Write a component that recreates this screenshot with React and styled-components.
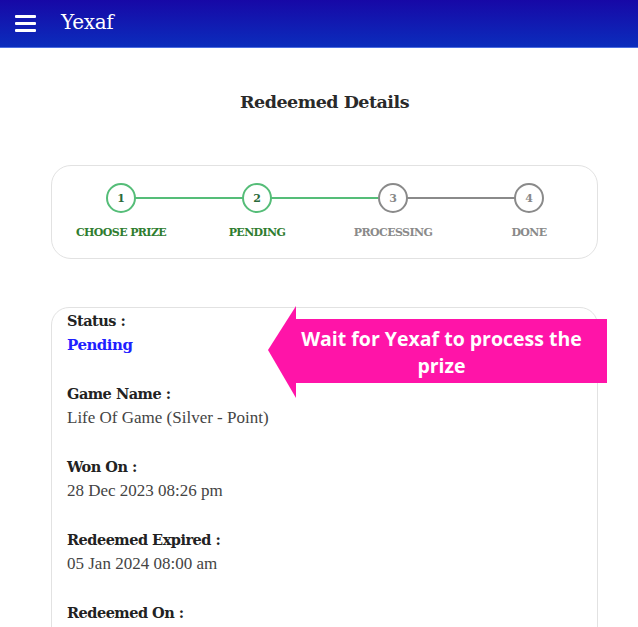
import React from "react";
import styled, { createGlobalStyle } from "styled-components";

const Global = createGlobalStyle`
  html, body { margin: 0; padding: 0; background: #fff; }
  body { font-family: "DejaVu Serif", "Liberation Serif", serif; }
`;

const Page = styled.div`
  width: 638px;
  height: 627px;
  overflow: hidden;
  position: relative;
  background: #fff;
`;

const Header = styled.header`
  height: 47px;
  display: flex;
  align-items: center;
  gap: 25px;
  padding: 0 15px;
  background: linear-gradient(180deg, #1708a6 0%, #0b2dbd 100%);
  border-bottom: 1px solid #4a6de0;
`;

const Burger = styled.div`
  width: 21px;
  display: flex;
  flex-direction: column;
  gap: 4px;
  span { display: block; height: 3px; background: #fff; border-radius: 1px; }
`;

const Brand = styled.div`
  color: #fff;
  font-family: "DejaVu Serif", serif;
  font-size: 20px;
  letter-spacing: -0.3px;
  margin-top: -4px;
`;

const Title = styled.h1`
  margin: 42px 0 0;
  padding-left: 11px;
  text-align: center;
  font-size: 17.5px;
  font-weight: bold;
  color: #2a2a2a;
  line-height: 24px;
  letter-spacing: -0.5px;
`;

const StepCard = styled.div`
  margin: 51px 40px 0 51px;
  height: 94px;
  border: 1px solid #e2e2e2;
  border-radius: 20px;
  display: grid;
  grid-template-columns: repeat(4, 136px);
  padding-left: 1px;
  box-sizing: border-box;
`;

const Step = styled.div`
  position: relative;
  display: flex;
  flex-direction: column;
  align-items: center;
  padding-top: 17px;
`;

const Line = styled.div`
  position: absolute;
  top: 31px;
  left: 50%;
  width: 136px;
  height: 2px;
  background: ${p => (p.$done ? "#55bd78" : "#8a8a8a")};
`;

const Circle = styled.div`
  position: relative;
  z-index: 1;
  width: 26px;
  height: 26px;
  border-radius: 50%;
  border: 2px solid ${p => (p.$done ? "#55bd78" : "#8a8a8a")};
  background: #fff;
  display: flex;
  align-items: center;
  justify-content: center;
  font-size: 11px;
  font-weight: bold;
  color: ${p => (p.$done ? "#2a6b3a" : "#888")};
`;

const StepLabel = styled.div`
  margin-top: 13px;
  font-size: 11px;
  line-height: 14px;
  font-weight: bold;
  letter-spacing: -0.6px;
  color: ${p => (p.$done ? "#2f7d2f" : "#8a8a8a")};
  white-space: nowrap;
`;

const DetailCard = styled.div`
  margin: 48px 40px 0 51px;
  border: 1px solid #e2e2e2;
  border-radius: 18px;
  padding: 1px 15px 40px;
  height: 400px;
`;

const Field = styled.div`
  margin-bottom: 25px;
`;

const Label = styled.div`
  font-size: 14.5px;
  font-weight: bold;
  color: #222;
  line-height: 24px;
  letter-spacing: -0.5px;
`;

const Value = styled.div`
  line-height: 24px;
  color: ${p => (p.$accent ? "#1f1fff" : "#444")};
  font-weight: ${p => (p.$accent ? "bold" : "normal")};
  font-family: ${p => (p.$accent ? '"DejaVu Serif", serif' : '"Liberation Serif", serif')};
  font-size: ${p => (p.$accent ? "15px" : "17px")};
  letter-spacing: ${p => (p.$accent ? "-0.5px" : "0")};
`;

const Callout = styled.div`
  position: absolute;
  left: 268px;
  top: 306px;
  width: 339px;
  height: 92px;
  display: flex;
`;

const Head = styled.svg`
  flex: none;
  width: 28px;
  height: 92px;
`;

const Body = styled.div`
  margin-top: 13px;
  width: 311px;
  height: 64px;
  background: #ff14a8;
  color: #fff;
  font-family: "Open Sans", sans-serif;
  font-weight: bold;
  font-size: 19.5px;
  line-height: 27px;
  text-align: center;
  padding: 6px 20px 0 0;
  box-sizing: border-box;
  white-space: nowrap;
`;

const steps = [
  { n: 1, label: "CHOOSE PRIZE", done: true, lineDone: true },
  { n: 2, label: "PENDING", done: true, lineDone: true },
  { n: 3, label: "PROCESSING", done: false, lineDone: false },
  { n: 4, label: "DONE", done: false },
];

const fields = [
  { label: "Status :", value: "Pending", accent: true },
  { label: "Game Name :", value: "Life Of Game (Silver - Point)" },
  { label: "Won On :", value: "28 Dec 2023 08:26 pm" },
  { label: "Redeemed Expired :", value: "05 Jan 2024 08:00 am" },
  { label: "Redeemed On :", value: "" },
];

export default function App() {
  return (
    <Page>
      <Global />
      <Header>
        <Burger><span /><span /><span /></Burger>
        <Brand>Yexaf</Brand>
      </Header>
      <Title>Redeemed Details</Title>
      <StepCard>
        {steps.map((s, i) => (
          <Step key={s.n}>
            {i < 3 && <Line $done={s.lineDone} />}
            <Circle $done={s.done}>{s.n}</Circle>
            <StepLabel $done={s.done}>{s.label}</StepLabel>
          </Step>
        ))}
      </StepCard>
      <DetailCard>
        {fields.map(f => (
          <Field key={f.label}>
            <Label>{f.label}</Label>
            <Value $accent={f.accent}>{f.value || "\u00a0"}</Value>
          </Field>
        ))}
      </DetailCard>
      <Callout>
        <Head viewBox="0 0 28 92">
          <polygon points="28,0 28,92 0,44" fill="#ff14a8" />
        </Head>
        <Body>Wait for Yexaf to process the<br />prize</Body>
      </Callout>
    </Page>
  );
}
